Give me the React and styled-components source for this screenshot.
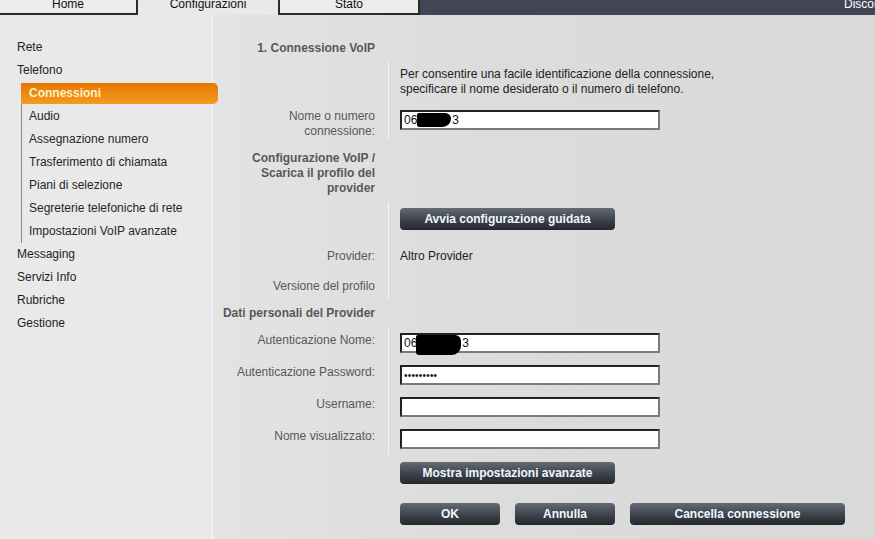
import React from "react";
import styled, { createGlobalStyle } from "styled-components";

const Global = createGlobalStyle`
  html, body { margin: 0; padding: 0; overflow: hidden; }
  body {
    font-family: "Liberation Sans", Arial, sans-serif;
    font-size: 12px;
    color: #222;
    background: #e9e9e9;
  }
`;

const Page = styled.div`
  width: 875px;
  height: 539px;
  display: flex;
  flex-direction: column;
  overflow: hidden;
`;

const TopBar = styled.div`
  display: flex;
  height: 15px;
  flex: none;
  background: #e9e9e9;
`;

const Tab = styled.div`
  box-sizing: border-box;
  width: ${(p) => p.w}px;
  height: 15px;
  flex: none;
  overflow: hidden;
  text-align: center;
  line-height: 15px;
  color: #111;
  background: ${(p) => (p.active ? "#e9e9e9" : "#ececec")};
  border-bottom: ${(p) => (p.active ? "none" : "2px solid #2b2b2e")};
  border-right: ${(p) => (p.active ? "none" : "2px solid #2b2b2e")};
  border-left: ${(p) => (p.leftBorder ? "2px solid #2b2b2e" : "none")};
`;

const TabText = styled.span`
  display: block;
  margin-top: -3px;
`;

const DarkBar = styled.div`
  flex: 1;
  background: #444457;
  padding-left: 424px;
  overflow: hidden;
  white-space: nowrap;
  color: #fff;
  line-height: 15px;
`;

const Body = styled.div`
  flex: 1;
  display: grid;
  grid-template-columns: 213px 1fr;
`;

const Sidebar = styled.nav`
  background: #e9e9e9;
  border-right: 1px solid #f7f7f7;
  padding-top: 21px;
`;

const NavItem = styled.div`
  height: 23px;
  line-height: 23px;
  padding-left: 17px;
  color: #1e1e1e;
`;

const SubList = styled.div`
  margin-left: 21px;
  border-left: 1px solid #8c8c8c;
`;

const SubItem = styled.div`
  height: 23px;
  line-height: 23px;
  padding-left: 7px;
  color: #262626;
`;

const ActiveItem = styled.div`
  position: relative;
  z-index: 1;
  height: 21px;
  line-height: 21px;
  margin: 1px -6px 1px -1px;
  padding-left: 8px;
  font-weight: bold;
  color: #fff2c4;
  background: linear-gradient(#e67700, #f49a22);
  border-radius: 0 5px 5px 0;
`;

const Main = styled.main`
  background: linear-gradient(90deg, #e3e3e3 0%, #dcdcdc 40%, #d9d9d9 100%);
  padding-top: 23px;
`;

const Row = styled.div`
  display: grid;
  grid-template-columns: 162px 1fr;
  height: ${(p) => p.h}px;
`;

const Label = styled.div`
  text-align: right;
  line-height: 15px;
  padding-top: ${(p) => p.pt || 0}px;
  color: #585858;
  font-weight: ${(p) => (p.heading ? "bold" : "normal")};
  white-space: ${(p) => (p.nowrap ? "nowrap" : "normal")};
`;

const Value = styled.div`
  margin-left: 13px;
  border-left: 1px solid ${(p) => (p.sep ? "#f5f5f5" : "transparent")};
  padding-left: 11px;
  padding-top: ${(p) => p.pt || 0}px;
  line-height: 15px;
  color: #222;
  display: flex;
  flex-direction: ${(p) => (p.inline ? "row" : "column")};
  align-items: flex-start;
  gap: 15px;
`;

const Field = styled.div`
  position: relative;
  box-sizing: border-box;
  width: 260px;
  height: 20px;
  background: #fff;
  border-style: solid;
  border-width: 2px;
  border-color: #222 #7a7a7a #7a7a7a #222;
  padding-left: 2px;
  line-height: 16px;
  color: #111;
  white-space: nowrap;
`;

const Spacer = styled.span`
  display: inline-block;
  width: ${(p) => p.w}px;
`;

const Blob = styled.span`
  position: absolute;
  left: ${(p) => p.x}px;
  top: ${(p) => p.y}px;
  width: ${(p) => p.w}px;
  height: ${(p) => p.h}px;
  background: #000;
  border-radius: 2px 6px 9px 3px;
`;

const Dots = styled.span`
  font-size: 10px;
  letter-spacing: 0.2px;
`;

const Button = styled.button`
  box-sizing: border-box;
  width: ${(p) => p.w}px;
  height: 22px;
  border: none;
  border-radius: 4px;
  padding: 0;
  background: linear-gradient(#656b76 0%, #40454e 50%, #23272d 100%);
  color: #f1f7ff;
  font-family: "Liberation Sans", Arial, sans-serif;
  font-size: 12px;
  font-weight: bold;
  line-height: 22px;
  text-align: center;
  cursor: pointer;
`;

export default function App() {
  return (
    <Page>
      <Global />
      <TopBar>
        <Tab w={138}>
          <TabText>Home</TabText>
        </Tab>
        <Tab w={140} active>
          <TabText>Configurazioni</TabText>
        </Tab>
        <Tab w={142} leftBorder>
          <TabText>Stato</TabText>
        </Tab>
        <DarkBar>
          <TabText>Disconnetti</TabText>
        </DarkBar>
      </TopBar>
      <Body>
        <Sidebar>
          <NavItem>Rete</NavItem>
          <NavItem>Telefono</NavItem>
          <SubList>
            <ActiveItem>Connessioni</ActiveItem>
            <SubItem>Audio</SubItem>
            <SubItem>Assegnazione numero</SubItem>
            <SubItem>Trasferimento di chiamata</SubItem>
            <SubItem>Piani di selezione</SubItem>
            <SubItem>Segreterie telefoniche di rete</SubItem>
            <SubItem>Impostazioni VoIP avanzate</SubItem>
          </SubList>
          <NavItem>Messaging</NavItem>
          <NavItem>Servizi Info</NavItem>
          <NavItem>Rubriche</NavItem>
          <NavItem>Gestione</NavItem>
        </Sidebar>
        <Main>
          <Row h={24}>
            <Label heading pt={3}>1. Connessione VoIP</Label>
            <Value />
          </Row>
          <Row h={41}>
            <Label />
            <Value sep pt={4.5}>
              <div>
                Per consentire una facile identificazione della connessione,
                <br />
                specificare il nome desiderato o il numero di telefono.
              </div>
            </Value>
          </Row>
          <Row h={34}>
            <Label pt={6}>
              Nome o numero
              <br />
              connessione:
            </Label>
            <Value sep pt={7}>
              <Field>
                06<Spacer w={35} />3
                <Blob x={15} y={1} w={34} h={14} />
              </Field>
            </Value>
          </Row>
          <Row h={66}>
            <Label heading pt={14}>
              Configurazione VoIP /
              <br />
              Scarica il profilo del
              <br />
              provider
            </Label>
            <Value />
          </Row>
          <Row h={37}>
            <Label />
            <Value sep pt={5}>
              <Button w={215}>Avvia configurazione guidata</Button>
            </Value>
          </Row>
          <Row h={30}>
            <Label pt={9}>Provider:</Label>
            <Value sep pt={9}>Altro Provider</Value>
          </Row>
          <Row h={30}>
            <Label pt={9}>Versione del profilo</Label>
            <Value sep />
          </Row>
          <Row h={27}>
            <Label heading nowrap pt={6}>Dati personali del Provider</Label>
            <Value />
          </Row>
          <Row h={32}>
            <Label pt={6}>Autenticazione Nome:</Label>
            <Value sep pt={6}>
              <Field>
                06<Spacer w={45} />3
                <Blob x={14} y={0} w={45} h={20} />
              </Field>
            </Value>
          </Row>
          <Row h={32}>
            <Label pt={6}>Autenticazione Password:</Label>
            <Value sep pt={6}>
              <Field>
                <Dots>•••••••••</Dots>
              </Field>
            </Value>
          </Row>
          <Row h={32}>
            <Label pt={6}>Username:</Label>
            <Value sep pt={6}>
              <Field />
            </Value>
          </Row>
          <Row h={32}>
            <Label pt={6}>Nome visualizzato:</Label>
            <Value sep pt={6}>
              <Field />
            </Value>
          </Row>
          <Row h={42}>
            <Label />
            <Value pt={7}>
              <Button w={215}>Mostra impostazioni avanzate</Button>
            </Value>
          </Row>
          <Row h={42}>
            <Label />
            <Value inline pt={6}>
              <Button w={100}>OK</Button>
              <Button w={100}>Annulla</Button>
              <Button w={215}>Cancella connessione</Button>
            </Value>
          </Row>
        </Main>
      </Body>
    </Page>
  );
}
